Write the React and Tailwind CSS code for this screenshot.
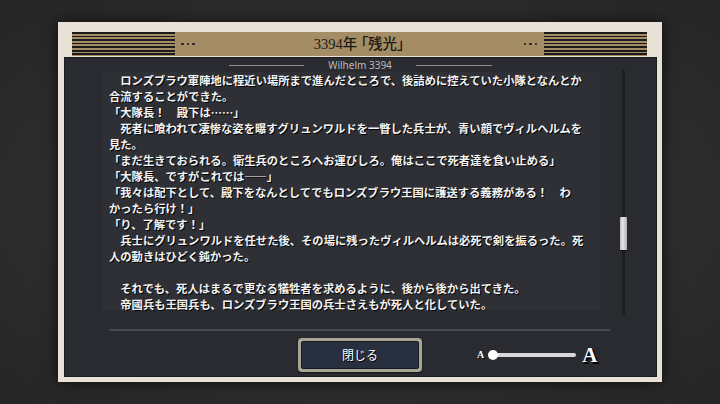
const lines = [
  '　ロンズブラウ軍陣地に程近い場所まで進んだところで、後詰めに控えていた小隊となんとか',
  '合流することができた。',
  '「大隊長！　殿下は……」',
  '　死者に喰われて凄惨な姿を曝すグリュンワルドを一瞥した兵士が、青い顔でヴィルヘルムを',
  '見た。',
  '「まだ生きておられる。衛生兵のところへお運びしろ。俺はここで死者達を食い止める」',
  '「大隊長、ですがこれでは――」',
  '「我々は配下として、殿下をなんとしてでもロンズブラウ王国に護送する義務がある！　わ',
  'かったら行け！」',
  '「り、了解です！」',
  '　兵士にグリュンワルドを任せた後、その場に残ったヴィルヘルムは必死で剣を振るった。死',
  '人の動きはひどく鈍かった。',
  '',
  '　それでも、死人はまるで更なる犠牲者を求めるように、後から後から出てきた。',
  '　帝國兵も王国兵も、ロンズブラウ王国の兵士さえもが死人と化していた。',
];

function Stripes() {
  return (
    <div className="h-full w-[103px] bg-[repeating-linear-gradient(to_bottom,#1b1b1b_0px,#1b1b1b_1.8px,#a48c64_1.8px,#a48c64_3.55px)]" />
  );
}

function Dots() {
  return (
    <div className="flex items-center gap-[3px]">
      <span className="h-[2.5px] w-[2.5px] rounded-full bg-[#1b1b1b]" />
      <span className="h-[2.5px] w-[2.5px] rounded-full bg-[#1b1b1b]" />
      <span className="h-[2.5px] w-[2.5px] rounded-full bg-[#1b1b1b]" />
    </div>
  );
}

export default function App() {
  return (
    <div className="h-[404px] w-[720px] overflow-hidden bg-[radial-gradient(ellipse_at_center,#383838_0%,#2e2e2e_55%,#252525_100%)] pl-[58px] pt-[22px]">
      <div className="flex h-[360px] w-[604px] flex-col bg-[#e7e1d8] pb-[5px] pl-[6px] pr-[5px] pt-[10px] shadow-[0_0_14px_rgba(0,0,0,0.7)]">
        {/* header band */}
        <div className="ml-[8px] mr-[10px] flex h-[24px] items-center bg-[#a48c64]">
          <Stripes />
          <div className="ml-[6px]">
            <Dots />
          </div>
          <div
            className="flex-1 text-center text-[14.5px] font-medium leading-none text-[#1c1a17] [font-feature-settings:'palt']"
            style={{ fontFamily: '"Liberation Serif", "Noto Sans CJK JP", serif' }}
          >
            3394年 「残光」
          </div>
          <div className="mr-[7px]">
            <Dots />
          </div>
          <Stripes />
        </div>

        {/* dark panel */}
        <div className="mt-[1px] flex flex-1 flex-col border border-[#1c1d21] bg-[#2a2b30]">
          <div className="flex h-[14px] items-center justify-center">
            <div className="h-px w-[75px] bg-[#8d8d8d]" />
            <div
              className="mx-[24px] text-[10px] leading-none text-[#b9b9b9]"
              style={{ fontFamily: '"Noto Sans", sans-serif' }}
            >
              Wilhelm 3394
            </div>
            <div className="h-px w-[76px] bg-[#8d8d8d]" />
          </div>

          <div className="ml-[38px] flex h-[239px] items-start">
            <div
              className="h-[239px] w-[497px] bg-[#2f3035] pl-[6px] text-[11.3px] font-bold leading-[16px] text-[#f4f4f4] [text-shadow:1px_1px_0_#000]"
              style={{ fontFamily: '"Noto Sans CJK JP", sans-serif' }}
            >
              {lines.map((l, i) => (
                <div key={i} className="h-[16px] whitespace-pre">
                  {l}
                </div>
              ))}
            </div>
            <div className="relative -mt-[2px] ml-[22px] h-[245px] w-[3px] bg-[#1d1e22]">
              <div className="absolute left-[-2px] top-[147px] h-[34px] w-[7px] rounded-[1px] border-b border-[#111] bg-[linear-gradient(to_right,#bdbdbd,#e6e6e6_40%,#b0b0b0)]" />
            </div>
          </div>

          <div className="ml-[44px] mt-[18px] h-[2px] w-[501px] bg-[#464950]" />

          <div className="mt-[7px] flex items-center">
            <div className="ml-[233px] flex h-[34px] w-[124px] items-center justify-center rounded-[4px] bg-[#a9a596] p-[3px] shadow-[0_1px_2px_rgba(0,0,0,0.6)]">
              <div
                className="flex h-full w-full items-center justify-center rounded-[2px] border border-[#15181f] bg-[#28303f] text-[12px] text-white [text-shadow:1px_1px_0_#000]"
                style={{ fontFamily: '"Noto Sans CJK JP", sans-serif' }}
              >
                閉じる
              </div>
            </div>

            <div
              className="ml-[55px] flex items-center text-white [text-shadow:1px_1px_0_#000]"
              style={{ fontFamily: '"Liberation Serif", serif' }}
            >
              <span className="text-[10px] font-bold leading-none">A</span>
              <div className="relative ml-[4px] flex h-[10px] w-[88px] items-center">
                <div className="ml-[4px] h-[4px] w-[84px] rounded-full bg-[#d9d9d9]" />
                <div className="absolute left-0 top-0 h-[10px] w-[10px] rounded-full bg-white" />
              </div>
              <span className="ml-[6px] text-[21px] font-bold leading-none [text-shadow:1px_1px_0_#000,2px_2px_0_#000]">A</span>
            </div>
          </div>
        </div>
      </div>
    </div>
  );
}
